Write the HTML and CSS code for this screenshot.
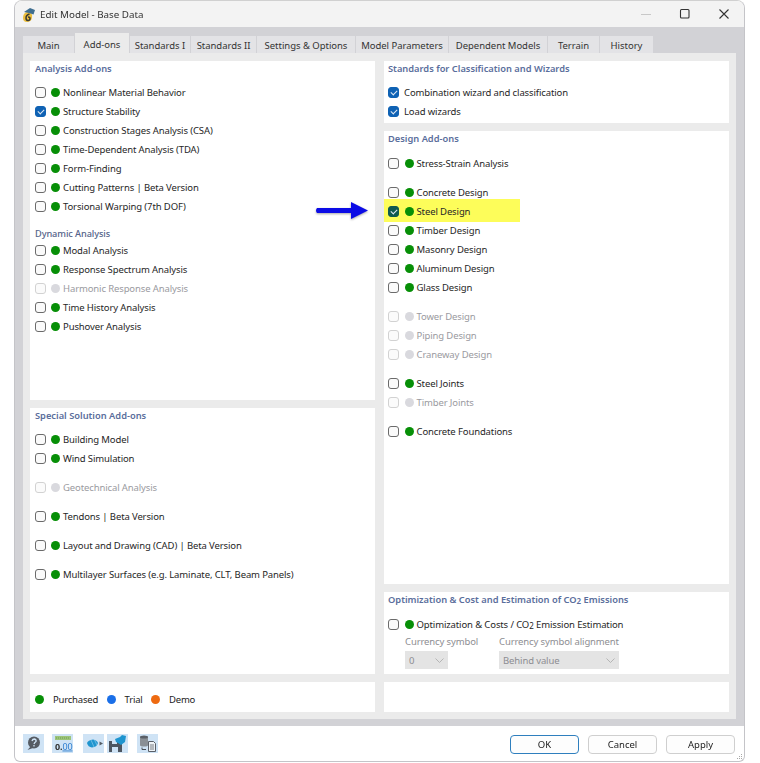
FILE: index.html
```html
<!DOCTYPE html>
<html lang="en">
<head>
<meta charset="utf-8">
<title>Edit Model - Base Data</title>
<link rel="stylesheet" href="styles.css">
</head>
<body>
<div class="window">
  <header class="titlebar">
    <svg class="logo" width="16" height="17" viewBox="0 0 16 17"><path d="M2 12Q2 7 6 6L10 7Q12 9 11 12Q10 16 6 16Q2 16 2 12Z" fill="#ecbf3f"/><path d="M3 6L9 2L14 4L12.500 8.500L8 7Z" fill="#3f6e8f"/><path d="M8.500 8Q5 9 5 12Q5 14.500 7 14.500Q9 14.500 9 12.500Q9 11 7 11" fill="none" stroke="#3a3a30" stroke-width="1.500"/></svg>
    <span class="title">Edit Model - Base Data</span>
    <div class="winbtns">
      <svg width="12" height="12" viewBox="0 0 12 12"><path d="M1 6.5H11" stroke="#c8c8c8"/></svg>
      <svg width="12" height="12" viewBox="0 0 12 12"><rect x="1.5" y="1.5" width="8.5" height="8.5" rx="1" fill="none" stroke="#333" stroke-width="1.1"/></svg>
      <svg width="12" height="12" viewBox="0 0 12 12"><path d="M1.5 1.5L10.5 10.5M10.5 1.5L1.5 10.5" stroke="#333" stroke-width="1.1"/></svg>
    </div>
  </header>
  <div class="band">
    <nav class="tabs">
      <span class="tab w-main">Main</span>
      <span class="tab active w-addons">Add-ons</span>
      <span class="tab w-std1">Standards I</span>
      <span class="tab w-std2">Standards II</span>
      <span class="tab w-set">Settings &amp; Options</span>
      <span class="tab w-par">Model Parameters</span>
      <span class="tab w-dep">Dependent Models</span>
      <span class="tab w-ter">Terrain</span>
      <span class="tab w-his">History</span>
    </nav>
    <main class="panel">
      <div class="col left">
        <section class="card h-analysis">
          <h2>Analysis Add-ons</h2>
          <div class="row"><i class="cb"></i><i class="dot"></i>Nonlinear Material Behavior</div>
          <div class="row"><i class="cb on"></i><i class="dot"></i>Structure Stability</div>
          <div class="row"><i class="cb"></i><i class="dot"></i>Construction Stages Analysis (CSA)</div>
          <div class="row"><i class="cb"></i><i class="dot"></i>Time-Dependent Analysis (TDA)</div>
          <div class="row"><i class="cb"></i><i class="dot"></i>Form-Finding</div>
          <div class="row"><i class="cb"></i><i class="dot"></i>Cutting Patterns | Beta Version</div>
          <div class="row"><i class="cb"></i><i class="dot"></i>Torsional Warping (7th DOF)</div>
          <h3>Dynamic Analysis</h3>
          <div class="row"><i class="cb"></i><i class="dot"></i>Modal Analysis</div>
          <div class="row"><i class="cb"></i><i class="dot"></i>Response Spectrum Analysis</div>
          <div class="row off"><i class="cb"></i><i class="dot"></i>Harmonic Response Analysis</div>
          <div class="row"><i class="cb"></i><i class="dot"></i>Time History Analysis</div>
          <div class="row"><i class="cb"></i><i class="dot"></i>Pushover Analysis</div>
        </section>
        <section class="card h-special">
          <h2>Special Solution Add-ons</h2>
          <div class="row"><i class="cb"></i><i class="dot"></i>Building Model</div>
          <div class="row"><i class="cb"></i><i class="dot"></i>Wind Simulation</div>
          <div class="row off sp"><i class="cb"></i><i class="dot"></i>Geotechnical Analysis</div>
          <div class="row sp"><i class="cb"></i><i class="dot"></i>Tendons | Beta Version</div>
          <div class="row sp"><i class="cb"></i><i class="dot"></i>Layout and Drawing (CAD) | Beta Version</div>
          <div class="row sp"><i class="cb"></i><i class="dot"></i>Multilayer Surfaces (e.g. Laminate, CLT, Beam Panels)</div>
        </section>
        <section class="card h-legend legend">
          <i class="dot"></i><span>Purchased</span>
          <i class="dot blue"></i><span>Trial</span>
          <i class="dot orange"></i><span>Demo</span>
        </section>
      </div>
      <div class="col right">
        <section class="card h-std">
          <h2>Standards for Classification and Wizards</h2>
          <div class="row"><i class="cb on"></i>Combination wizard and classification</div>
          <div class="row"><i class="cb on"></i>Load wizards</div>
        </section>
        <section class="card h-design">
          <h2>Design Add-ons</h2>
          <div class="row"><i class="cb"></i><i class="dot"></i>Stress-Strain Analysis</div>
          <div class="row sp"><i class="cb"></i><i class="dot"></i>Concrete Design</div>
          <div class="row hl"><i class="cb on dark"></i><i class="dot"></i>Steel Design</div>
          <div class="row"><i class="cb"></i><i class="dot"></i>Timber Design</div>
          <div class="row"><i class="cb"></i><i class="dot"></i>Masonry Design</div>
          <div class="row"><i class="cb"></i><i class="dot"></i>Aluminum Design</div>
          <div class="row"><i class="cb"></i><i class="dot"></i>Glass Design</div>
          <div class="row off sp"><i class="cb"></i><i class="dot"></i>Tower Design</div>
          <div class="row off"><i class="cb"></i><i class="dot"></i>Piping Design</div>
          <div class="row off"><i class="cb"></i><i class="dot"></i>Craneway Design</div>
          <div class="row sp"><i class="cb"></i><i class="dot"></i>Steel Joints</div>
          <div class="row off"><i class="cb"></i><i class="dot"></i>Timber Joints</div>
          <div class="row sp"><i class="cb"></i><i class="dot"></i>Concrete Foundations</div>
        </section>
        <section class="card h-opt">
          <h2>Optimization &amp; Cost and Estimation of CO<span class="sub">2</span> Emissions</h2>
          <div class="row"><i class="cb"></i><i class="dot"></i>Optimization &amp; Costs / CO<span class="sub">2</span> Emission Estimation</div>
          <div class="fields">
            <div class="field f-sym"><label>Currency symbol</label><div class="select">0<svg width="9" height="5" viewBox="0 0 9 5"><path d="M.5.5L4.5 4.5L8.5.5" fill="none" stroke="#b5b5b5"/></svg></div></div>
            <div class="field f-align"><label>Currency symbol alignment</label><div class="select">Behind value<svg width="9" height="5" viewBox="0 0 9 5"><path d="M.5.5L4.5 4.5L8.5.5" fill="none" stroke="#b5b5b5"/></svg></div></div>
          </div>
        </section>
        <section class="card h-legend"></section>
      </div>
    </main>
  </div>
  <footer class="footer">
    <div class="tools">
      <span class="tool"><svg width="21" height="19" viewBox="0 0 21 19"><circle cx="11" cy="8.500" r="6" fill="#565c64"/><path d="M8 12L4.500 16L10 14Z" fill="#565c64"/><path d="M9 7Q9.500 5 11.500 5Q13.500 5.500 13 7.500Q11.500 8.500 11 10M11 11V12.500" fill="none" stroke="#cfe3f5" stroke-width="1.300"/></svg></span>
      <span class="tool t2"><svg width="21" height="19" viewBox="0 0 21 19"><rect x="3" y="2" width="16" height="4" fill="#9cc47a"/><path d="M4 4H18" stroke="#6f9c50" stroke-dasharray="1 1"/><text x="3" y="15.500" class="tnum">0.<tspan class="tblue" text-decoration="underline">00</tspan></text></svg></span>
      <span class="tool t3"><svg width="21" height="19" viewBox="0 0 21 19"><path d="M4 9Q5 6 10 5.500Q14 6 15 9Q14 13 9 13.500Q5 13 4 9Z" fill="#1f95cf"/><path d="M8 6L11 13M11.500 6L14 11" stroke="#7cc3e6" stroke-width=".8"/><path d="M16.500 7.500L20 9.500L16.500 11.500Z" fill="#565c64"/></svg></span>
      <span class="tool t4"><svg width="21" height="19" viewBox="0 0 21 19"><path d="M2 7H13L15 9V18H2Z" fill="#4d5560"/><rect x="5" y="7" width="5" height="3" fill="#cfe3f5"/><rect x="5" y="13" width="6" height="5" fill="#cfe3f5"/><path d="M8 5L13 3L15 1L19 2L18 8L14 11L11 9L9 8Z" fill="#1f95cf"/></svg></span>
      <span class="tool t5"><svg width="21" height="19" viewBox="0 0 21 19"><rect x="3" y="3" width="8" height="8" fill="#8a9096"/><ellipse cx="7" cy="3" rx="4" ry="1.500" fill="#5a6068"/><ellipse cx="7" cy="11" rx="4" ry="1.500" fill="#8a9096"/><path d="M5 13.500V15.500H9" fill="none" stroke="#4a5058"/><path d="M11.500 7.500H16.500L18.500 9.500V17.500H11.500Z" fill="#eef3f7" stroke="#5a6068"/><path d="M13 11H17M13 13H17M13 15H17" stroke="#5a6068" stroke-width=".8"/></svg></span>
    </div>
    <div class="btns">
      <button class="btn primary">OK</button>
      <button class="btn">Cancel</button>
      <button class="btn">Apply</button>
    </div>
    <svg class="grip" width="7" height="7" viewBox="0 0 7 7"><path d="M5 1h1v1h-1zM3 3h1v1h-1zM5 3h1v1h-1zM1 5h1v1h-1zM3 5h1v1h-1zM5 5h1v1h-1z" fill="#a8a8a8"/></svg>
  </footer>
</div>
<svg class="arrow" width="56" height="20" viewBox="0 0 56 20"><path d="M3 7H37V1L54 9.500L37 18V12H3Q1 9.500 3 7Z" fill="#0c0ce6"/></svg>
</body>
</html>
```
FILE: styles.css
```css
* { box-sizing: border-box; }
html, body { margin: 0; padding: 0; background: #fff; }
body {
  width: 760px; height: 763px; position: relative; overflow: hidden;
  font-family: "Noto Sans", "Open Sans", sans-serif; font-size: 9.500px; letter-spacing: -.12px; color: #222;
}
.window {
  margin-left: 14px; width: 731px; height: 762px; position: relative;
  border: 1px solid #c4c4c8; border-top-color: #d0d0d0; border-radius: 8px 8px 6px 6px;
  overflow: hidden; display: flex; flex-direction: column; background: #fff;
  filter: blur(.3px);
}
.titlebar {
  height: 26px; flex: none; background: #f3f3f3; display: flex; align-items: center; padding-left: 6px;
}
.logo { margin-right: 3px; }
.title { font-size: 9.800px; letter-spacing: 0; color: #333; }
.winbtns { margin-left: auto; display: flex; gap: 27px; padding-right: 14px; align-items: center; }
.band { flex: none; background: #d2d2d6; padding: 9px 8px 7px; display: flex; flex-direction: column; }
.tabs { display: flex; gap: 1px; height: 17px; flex: none; align-items: flex-end; }
.tab {
  height: 17px; background: #e3e3e6; display: flex; align-items: center; justify-content: center;
  color: #333; letter-spacing: -.03px; padding-top: 1px;
}
.tab.active { height: 20px; background: #ebebeb; padding-top: 3px; }
.w-main { width: 51px; } .w-addons { width: 54px; } .w-std1 { width: 60px; } .w-std2 { width: 65px; }
.w-set { width: 98px; } .w-par { width: 92px; } .w-dep { width: 98px; } .w-ter { width: 51px; } .w-his { width: 53px; }
.panel {
  flex: none; background: #ebebeb; padding: 8px 7px 7px; display: grid; grid-template-columns: 345px 345px; column-gap: 9px;
}
.col { display: flex; flex-direction: column; gap: 8px; }
.card { background: #fff; padding: 0 5px; flex: none; }
.right .card { padding-left: 4px; }
.h-analysis { height: 339px; } .h-special { height: 266px; } .h-legend { height: 30px; }
.h-std { height: 62px; } .h-design { height: 453px; } .h-opt { height: 82px; }
h2, h3 {
  margin: 0; height: 16px; line-height: 16px; font-size: 9.300px; letter-spacing: 0; font-weight: 600; color: #5a6e9c;
}
h2 { margin-bottom: 6px; }
h3 { margin-top: 10px; height: 15px; font-size: 9.200px; letter-spacing: -.08px; font-weight: 500; color: #55648a; }
.row { display: flex; align-items: center; height: 19px; white-space: pre; color: #262626; }
.left .row { padding-bottom: 1px; }
.left .row .cb, .left .row .dot { margin-top: 1px; }
.h-design .row, .h-opt .row { padding-top: 1px; }
.sp { margin-top: 10px; }
.cb {
  width: 11px; height: 11px; flex: none; border: 1px solid #6b6b6b; border-radius: 3px; background: #fafafa;
  margin-right: 5px; position: relative;
}
.right .cb:has(+ .dot) { margin-right: 6px; }
.cb.on { background: #0f62b4; border-color: #0f62b4; }
.cb.on::after {
  content: ""; position: absolute; left: 2px; top: 2px; width: 5px; height: 3px;
  border-left: 1px solid #dfe9f5; border-bottom: 1px solid #dfe9f5; transform: rotate(-45deg);
}
.cb.dark { background: #0e5a50; border-color: #0e5a50; }
.dot { width: 9px; height: 9px; flex: none; border-radius: 50%; background: #078f07; margin-right: 3px; }
.right .dot { margin-right: 2.500px; }
.off { color: #9a9aa0; }
.off .cb { border-color: #d2d2d2; background: #fbfbfb; }
.off .dot { background: #d9d9de; }
.hl { background: #fdfd5a; width: 136px; height: 23px; margin: -2px 0 -2px -4px; padding-left: 4px; }
.sub { font-size: 8px; position: relative; top: 1px; }
.legend { display: flex; align-items: center; padding: 5px 0 0 5px; letter-spacing: -.2px; }
.legend .dot { margin-right: 9px; }
.legend span { margin-right: 8.500px; }
.blue { background: #1a6fe8; } .orange { background: #ee6a10; }
.fields { display: flex; padding-left: 17px; margin-top: 2px; }
.field label { display: block; height: 14px; line-height: 14px; color: #8d8d92; white-space: nowrap; }
.f-sym { width: 94px; }
.select {
  height: 18px; margin-top: 2px; background: #e4e4e4; color: #8d8d92; display: flex; align-items: center;
  justify-content: space-between; padding: 0 4px;
}
.f-sym .select { width: 43px; } .f-align .select { width: 120px; }
.footer { flex: 1; display: flex; justify-content: space-between; align-items: flex-start; padding: 8px 9px 0 8px; }
.tools { display: flex; }
.tool { width: 21px; height: 19px; background: #cfe3f5; display: block; }
.tool svg { display: block; }
.t2 { margin-left: 8px; } .t3 { margin-left: 10px; } .t4 { margin-left: 3px; } .t5 { margin-left: 9px; }
.tnum { font-size: 9px; font-weight: 700; fill: #333; font-family: "Noto Sans", sans-serif; }
.tblue { fill: #2f7fd0; font-weight: 400; }
.btns { display: flex; gap: 9px; margin-top: 1px; }
.btn {
  width: 69px; height: 19px; border: 1px solid #cfcfcf; border-radius: 4px; background: #fdfdfd;
  font: 9.500px "Noto Sans", sans-serif; color: #222; padding: 0;
}
.btn.primary { border-color: #2f7fbe; }
.grip { position: absolute; right: 1px; bottom: 1px; }
.arrow { position: absolute; left: 314px; top: 201px; filter: drop-shadow(0 1.500px 1px rgba(0,0,0,.35)); }
```
